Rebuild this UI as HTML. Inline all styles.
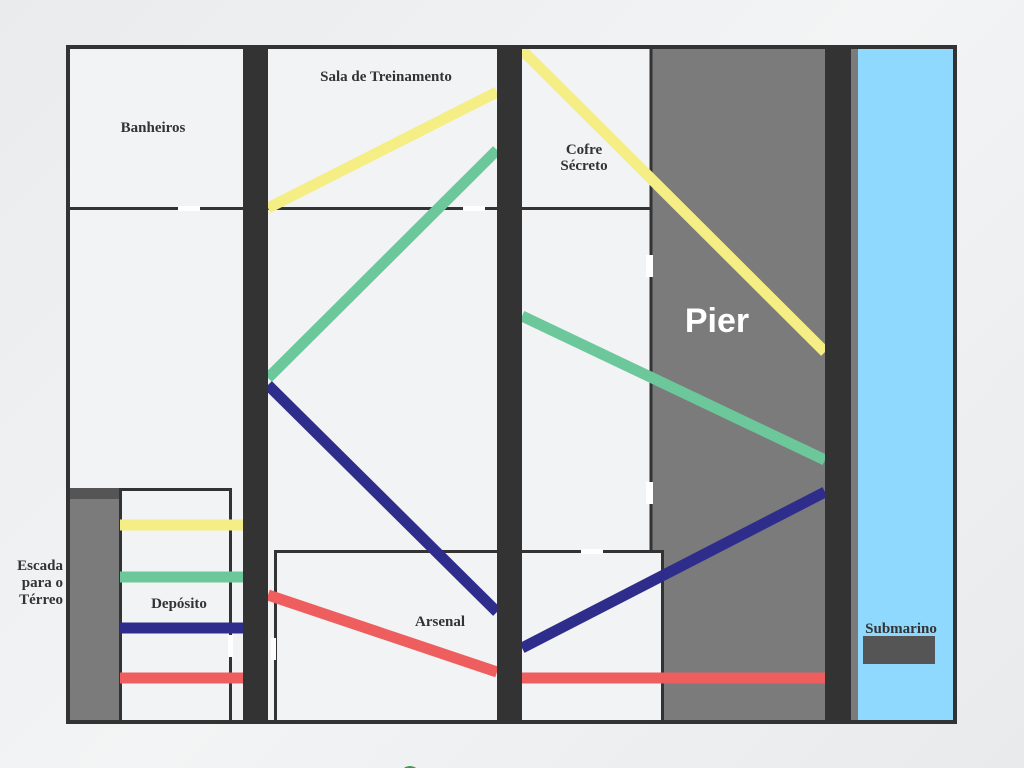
<!DOCTYPE html>
<html><head><meta charset="utf-8"><style>
html,body{margin:0;padding:0;width:1024px;height:768px;overflow:hidden;background:linear-gradient(135deg,#e9ebed,#f3f4f5 50%,#e8eaec);}
svg{position:absolute;left:0;top:0}
text{font-family:"Liberation Serif",serif;font-weight:bold;fill:#333}
</style></head><body>
<svg width="1024" height="768" viewBox="0 0 1024 768">
<rect x="68" y="47" width="887" height="675" fill="#f2f3f4"/>
<rect x="651" y="47" width="176" height="675" fill="#7b7b7b"/>
<line x1="651" y1="47" x2="651" y2="552" stroke="#333" stroke-width="3"/>
<rect x="851" y="47" width="8" height="675" fill="#7b7b7b"/>
<rect x="858" y="47" width="97" height="675" fill="#8fd8fe"/>
<line x1="68" y1="208.5" x2="651" y2="208.5" stroke="#333" stroke-width="3"/>
<rect x="178" y="206" width="22" height="5" fill="#fff"/>
<rect x="463" y="206" width="22" height="5" fill="#fff"/>
<rect x="646" y="255" width="7" height="22" fill="#fff"/>
<rect x="646" y="482" width="7" height="22" fill="#fff"/>
<rect x="68" y="488" width="52" height="234" fill="#7b7b7b"/>
<rect x="68" y="488" width="52" height="11" fill="#555"/>
<rect x="120.5" y="489.5" width="110" height="232" fill="none" stroke="#333" stroke-width="3"/>
<rect x="228" y="635" width="5" height="22" fill="#fff"/>
<rect x="275.5" y="551.5" width="387" height="170" fill="#f2f3f4" stroke="#333" stroke-width="3"/>
<rect x="581" y="549" width="22" height="5" fill="#fff"/>
<rect x="271" y="638" width="5" height="22" fill="#fff"/>
<rect x="664" y="553" width="163" height="169" fill="#7b7b7b"/>
<g stroke-width="11" stroke-linecap="butt">
<line x1="268" y1="208" x2="497" y2="92" stroke="#f5ee84"/>
<line x1="522" y1="50" x2="825" y2="352" stroke="#f5ee84"/>
<line x1="120" y1="525" x2="243" y2="525" stroke="#f5ee84"/>
<line x1="268" y1="378" x2="497" y2="150" stroke="#6cc89a"/>
<line x1="522" y1="316" x2="825" y2="460" stroke="#6cc89a"/>
<line x1="120" y1="577" x2="243" y2="577" stroke="#6cc89a"/>
<line x1="268" y1="385" x2="497" y2="612" stroke="#2e2d8c"/>
<line x1="522" y1="648" x2="825" y2="492" stroke="#2e2d8c"/>
<line x1="120" y1="628" x2="243" y2="628" stroke="#2e2d8c"/>
<line x1="268" y1="595" x2="497" y2="672" stroke="#ef5e5e"/>
<line x1="522" y1="678" x2="825" y2="678" stroke="#ef5e5e"/>
<line x1="120" y1="678" x2="243" y2="678" stroke="#ef5e5e"/>
</g>
<rect x="243" y="47" width="25" height="675" fill="#333"/>
<rect x="497" y="47" width="25" height="675" fill="#333"/>
<rect x="825" y="47" width="26" height="675" fill="#333"/>
<rect x="68" y="47" width="887" height="675" fill="none" stroke="#333" stroke-width="4"/>
<rect x="863" y="636" width="72" height="28" fill="#555"/>
<circle cx="410" cy="776" r="10" fill="#3a9a4a"/>
<text x="153" y="132" font-size="15" text-anchor="middle">Banheiros</text>
<text x="386" y="81" font-size="15" text-anchor="middle">Sala de Treinamento</text>
<text x="584" y="154" font-size="15" text-anchor="middle">Cofre</text>
<text x="584" y="170" font-size="15" text-anchor="middle">Sécreto</text>
<text x="717" y="332" font-size="34" text-anchor="middle" style="fill:#fff;font-family:'Liberation Sans',sans-serif">Pier</text>
<text x="179" y="608" font-size="15" text-anchor="middle">Depósito</text>
<text x="440" y="626" font-size="15" text-anchor="middle">Arsenal</text>
<text x="901" y="633" font-size="15" text-anchor="middle">Submarino</text>
<text x="63" y="570" font-size="15" text-anchor="end">Escada</text>
<text x="63" y="587" font-size="15" text-anchor="end">para o</text>
<text x="63" y="604" font-size="15" text-anchor="end">Térreo</text>
</svg>
</body></html>
